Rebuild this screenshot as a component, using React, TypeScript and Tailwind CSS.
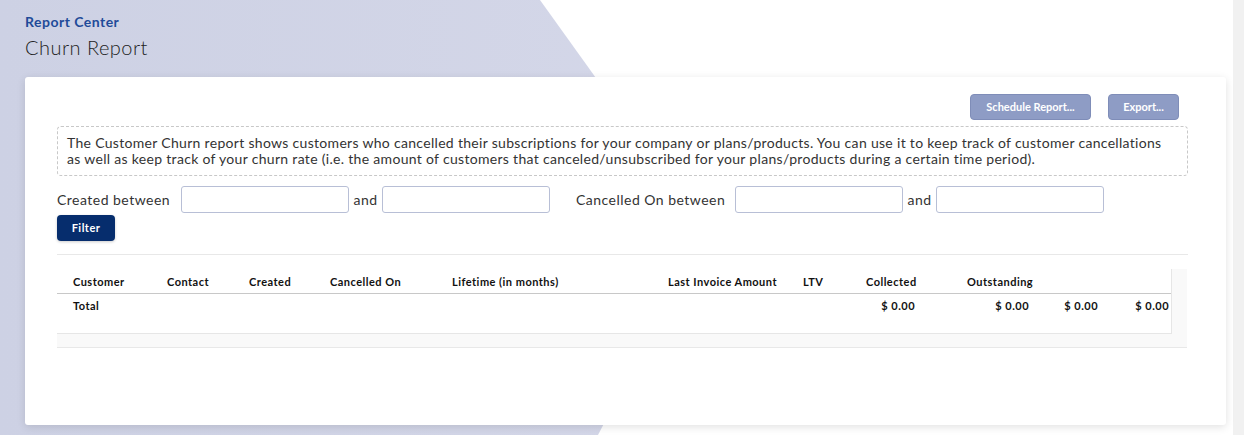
export default function App() {
  const headers = [
    { label: "Customer", w: "w-[94px]" },
    { label: "Contact", w: "w-[82px]" },
    { label: "Created", w: "w-[81px]" },
    { label: "Cancelled On", w: "w-[122px]" },
    { label: "Lifetime (in months)", w: "w-[216px]" },
    { label: "Last Invoice Amount", w: "w-[135px]" },
    { label: "LTV", w: "w-[63px]" },
    { label: "Collected", w: "w-[101px]" },
    { label: "Outstanding", w: "w-[114px]" },
  ];

  return (
    <div className="relative min-h-[435px] w-[1244px] overflow-hidden bg-white font-['Lato',sans-serif] tracking-[0.03em] text-[#333]">
      {/* background shape */}
      <div className="absolute inset-0 bg-gradient-to-r from-[#cdd1e4] to-[#dadcec] [clip-path:polygon(0_0,540px_0,705px_230px,598px_435px,0_435px)]" />
      <div className="absolute right-0 top-0 h-full w-[11px] bg-[#f1f1f1]" />

      <div className="relative px-[25px] pt-[12px]">
        <div className="text-[14px] font-bold leading-[20px] text-[#1f4b99]">Report Center</div>
        <div className="mt-[2px] text-[20px] font-light leading-[26px] text-[#222]">Churn Report</div>

        <div className="mt-[17px] h-[348px] w-[1201px] rounded-[3px] bg-white pl-[32px] pr-[38px] pt-[17px] shadow-[0_2px_8px_rgba(0,0,0,0.12)]">
          <div className="flex justify-end gap-[17px] pr-[9px]">
            <button className="h-[26px] w-[121px] rounded-[4px] border border-[#7f8db8] bg-[#8e9cc5] text-[11px] font-bold tracking-normal text-white">
              Schedule Report...
            </button>
            <button className="h-[26px] w-[71px] rounded-[4px] border border-[#7f8db8] bg-[#8e9cc5] text-[11px] font-bold tracking-normal text-white">
              Export...
            </button>
          </div>

          <div className="mt-[6px] rounded-[4px] border border-dashed border-[#c8c8c8] px-[9px] py-[8px] text-[14px] leading-[16px] tracking-[0.022em] text-[#333]">
            The Customer Churn report shows customers who cancelled their subscriptions for your company or plans/products. You can use it to keep track of customer cancellations as well as keep track of your churn rate (i.e. the amount of customers that canceled/unsubscribed for your plans/products during a certain time period).
          </div>

          <div className="mt-[10px] flex items-center text-[14px]">
            <span className="w-[124px]">Created between</span>
            <input className="h-[27px] w-[168px] rounded-[3px] border border-[#b8bfd6] bg-white" />
            <span className="w-[33px] text-center">and</span>
            <input className="h-[27px] w-[168px] rounded-[3px] border border-[#b8bfd6] bg-white" />
            <span className="ml-[26px] w-[159px]">Cancelled On between</span>
            <input className="h-[27px] w-[168px] rounded-[3px] border border-[#b8bfd6] bg-white" />
            <span className="w-[33px] text-center">and</span>
            <input className="h-[27px] w-[168px] rounded-[3px] border border-[#b8bfd6] bg-white" />
          </div>

          <button className="mt-[2px] h-[26px] w-[58px] rounded-[4px] bg-[#062d6d] text-[11px] font-bold text-white shadow-[0_1px_3px_rgba(0,0,0,0.2)]">
            Filter
          </button>

          <div className="mt-[13px] border-t border-[#e8e8e8]" />

          <div className="mt-[14px] w-[1130px] border-b border-[#e8e8e8] bg-[#f9f9f9] pr-[15px] pb-[13px]">
            <div className="border-b border-r border-[#e6e6e6] bg-white text-[11px] font-bold text-[#111]">
              <div className="flex h-[25px] items-end border-b border-[#c8c8c8] pb-[3px] pl-[16px]">
                {headers.map((h) => (
                  <span key={h.label} className={h.w}>
                    {h.label}
                  </span>
                ))}
              </div>
              <div className="flex h-[39px] pt-[4px] pl-[16px]">
                <span className="w-[763px]">Total</span>
                <span className="w-[79px] text-right">$ 0.00</span>
                <span className="w-[114px] text-right">$ 0.00</span>
                <span className="w-[69px] text-right">$ 0.00</span>
                <span className="w-[71px] text-right">$ 0.00</span>
              </div>
            </div>
          </div>
        </div>
      </div>
    </div>
  );
}
